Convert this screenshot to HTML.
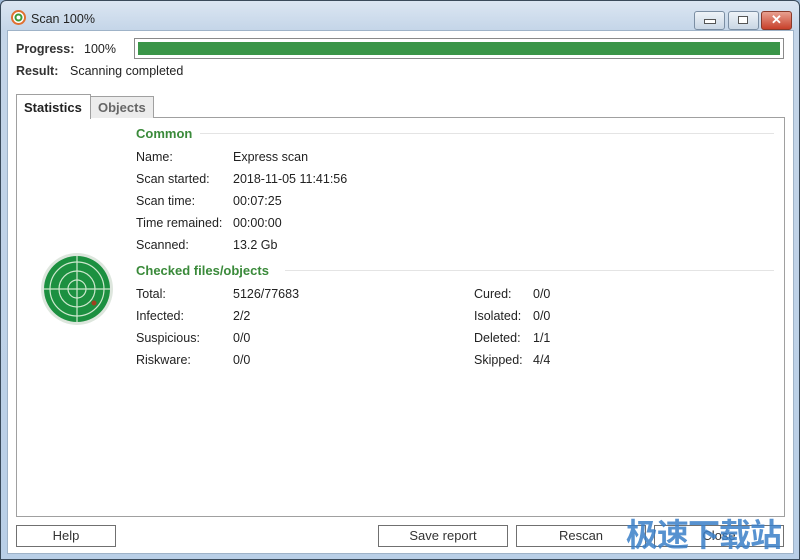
<!DOCTYPE html>
<html><head><style>
body{margin:0;width:800px;height:560px;overflow:hidden;background:#9db8d6;font-family:"Liberation Sans",sans-serif;font-size:12.5px;color:#222}
.win{position:absolute;left:0;top:0;width:798px;height:558px;border:1px solid #3a4a5a;border-radius:6px 6px 0 0;background:linear-gradient(#dbe6f2,#c4d5e8 30px,#b9cfe7);}
.client{position:absolute;left:7px;top:30px;width:785px;height:522px;background:#fff;border:1px solid #9fb3c8}
.a{position:absolute;white-space:nowrap}
.tb{position:absolute;top:10px;height:17px;border:1px solid #7b8ea3;border-radius:3px;background:linear-gradient(#eef3f8,#c9d6e4)}
.g{color:#3a8a3a;font-weight:bold;font-size:13px}
.btn{position:absolute;top:525px;height:20px;border:1px solid #707070;background:#fff;text-align:center;line-height:20px;font-size:13px;color:#333}
.line{position:absolute;height:1px;background:#e4e4e4}
</style></head><body>
<div class="win">
<svg class="a" style="left:10px;top:9px" width="15" height="15" viewBox="0 0 15 15"><circle cx="7.5" cy="7.5" r="6.5" fill="#fff" stroke="#e07030" stroke-width="2"/><circle cx="7.5" cy="7.5" r="3" fill="none" stroke="#3a9a3a" stroke-width="2"/></svg>
<div class="a" style="left:30px;top:11px;font-size:12.5px">Scan 100%</div>
<div class="tb" style="left:693px;width:29px"><div style="position:absolute;left:9px;top:7px;width:10px;height:3px;border:1px solid #555;background:#fff"></div></div>
<div class="tb" style="left:727px;width:29px"><div style="position:absolute;left:9px;top:4px;width:8px;height:6px;border:1px solid #555;background:#fff"></div></div>
<div class="tb" style="left:760px;width:29px;background:linear-gradient(#e8a090,#c8402a);border-color:#8a3a2a;color:#fff;text-align:center;font-weight:bold;line-height:16px;font-size:13px">✕</div>
</div>
<div class="client"></div>
<div class="a" style="left:16px;top:42px;font-weight:bold;color:#333">Progress:</div>
<div class="a" style="left:84px;top:42px">100%</div>
<div style="position:absolute;left:134px;top:38px;width:648px;height:19px;border:1px solid #8a8a8a;background:#fff"><div style="position:absolute;left:3px;top:3px;right:3px;bottom:3px;background:#3a9548"></div></div>
<div class="a" style="left:16px;top:64px;font-weight:bold;color:#333">Result:</div>
<div class="a" style="left:70px;top:64px">Scanning completed</div>
<div style="position:absolute;left:16px;top:117px;width:767px;height:398px;border:1px solid #a0a0a0"></div>
<div style="position:absolute;left:90px;top:96px;width:62px;height:21px;border:1px solid #a0a0a0;border-bottom:none;background:#ececec"></div>
<div class="a" style="left:98px;top:100px;font-size:13px;font-weight:bold;color:#666">Objects</div>
<div style="position:absolute;left:16px;top:94px;width:73px;height:24px;border:1px solid #a0a0a0;border-bottom:none;background:#fff"></div>
<div class="a" style="left:24px;top:100px;font-size:13px;font-weight:bold;color:#222">Statistics</div>
<svg class="a" style="left:40px;top:252px" width="74" height="74" viewBox="0 0 74 74"><circle cx="37" cy="37" r="36" fill="#dde6dd"/><circle cx="37" cy="37" r="33" fill="#1c9040"/><g fill="none" stroke="#cde8cd" stroke-width="1.2"><circle cx="37" cy="37" r="27"/><circle cx="37" cy="37" r="18"/><circle cx="37" cy="37" r="9"/><path d="M37 4V70M4 37H70"/></g><circle cx="54" cy="51" r="2.5" fill="#a04020"/></svg>
<div class="a g" style="left:136px;top:126px">Common</div><div class="line" style="left:200px;top:133px;width:574px"></div>
<div class="a" style="left:136px;top:150px">Name:</div><div class="a" style="left:233px;top:150px">Express scan</div>
<div class="a" style="left:136px;top:172px">Scan started:</div><div class="a" style="left:233px;top:172px">2018-11-05 11:41:56</div>
<div class="a" style="left:136px;top:194px">Scan time:</div><div class="a" style="left:233px;top:194px">00:07:25</div>
<div class="a" style="left:136px;top:216px">Time remained:</div><div class="a" style="left:233px;top:216px">00:00:00</div>
<div class="a" style="left:136px;top:238px">Scanned:</div><div class="a" style="left:233px;top:238px">13.2 Gb</div>
<div class="a g" style="left:136px;top:263px">Checked files/objects</div><div class="line" style="left:285px;top:270px;width:489px"></div>
<div class="a" style="left:136px;top:287px">Total:</div><div class="a" style="left:233px;top:287px">5126/77683</div>
<div class="a" style="left:136px;top:309px">Infected:</div><div class="a" style="left:233px;top:309px">2/2</div>
<div class="a" style="left:136px;top:331px">Suspicious:</div><div class="a" style="left:233px;top:331px">0/0</div>
<div class="a" style="left:136px;top:353px">Riskware:</div><div class="a" style="left:233px;top:353px">0/0</div>
<div class="a" style="left:474px;top:287px">Cured:</div><div class="a" style="left:533px;top:287px">0/0</div>
<div class="a" style="left:474px;top:309px">Isolated:</div><div class="a" style="left:533px;top:309px">0/0</div>
<div class="a" style="left:474px;top:331px">Deleted:</div><div class="a" style="left:533px;top:331px">1/1</div>
<div class="a" style="left:474px;top:353px">Skipped:</div><div class="a" style="left:533px;top:353px">4/4</div>
<div class="btn" style="left:16px;width:98px">Help</div>
<div class="btn" style="left:378px;width:128px">Save report</div>
<div class="btn" style="left:516px;width:128px">Rescan</div>
<div class="btn" style="left:654px;width:128px">Close</div>
<div class="a" style="left:626px;top:510px;font-family:'Noto Sans CJK SC',sans-serif;font-size:32px;font-weight:bold;color:#3a7fc8;opacity:.85;letter-spacing:-1px">极速下载站</div>
</body></html>
